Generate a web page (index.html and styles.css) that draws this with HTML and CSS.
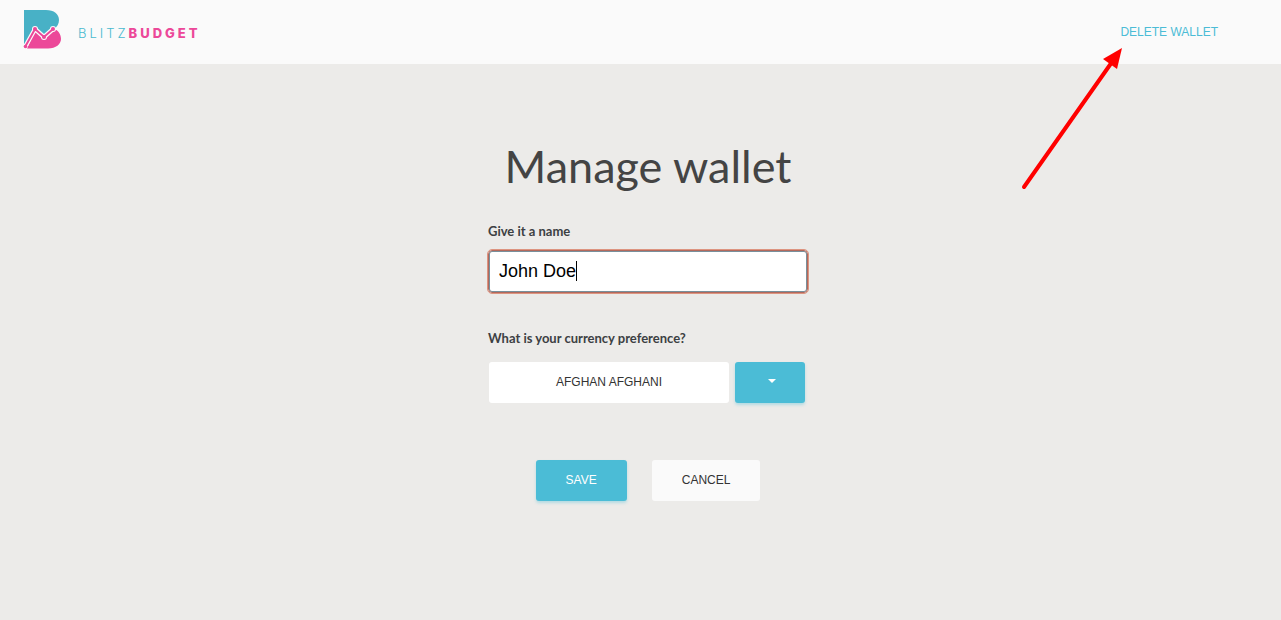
FILE: index.html
```html
<!DOCTYPE html>
<html lang="en">
<head>
<meta charset="utf-8">
<meta name="viewport" content="width=device-width, initial-scale=1">
<title>Manage wallet</title>
<link rel="stylesheet" href="styles.css">
</head>
<body>
<header class="topbar">
  <a class="brand" href="#">
    <svg class="brand-mark" viewBox="0 0 40 41" width="40" height="41" aria-hidden="true">
      <path fill="#48b1c6" d="M1 1H23C31 1 36 5 36 11C36 15 34 18 31 20L21 28L12 20L1 38Z"/>
      <path fill="#ec4899" d="M4 39.500L12 22L21 30L31 20C35 21 38 25 38 30C38 35 33 39.500 25 39.500Z"/>
      <path fill="none" stroke="#fafafa" stroke-width="4.500" stroke-linejoin="round" d="M2 38L12 20L21 28L30 20"/>
      <g fill="#fafafa"><circle cx="12" cy="20" r="3"/><circle cx="21" cy="28" r="3"/><circle cx="30" cy="20" r="3"/></g>
      <path fill="none" stroke="#ec4899" stroke-width="2" d="M2 38L12 20L21 28L30 20"/>
      <g fill="#ec4899"><circle cx="2.500" cy="37.500" r="1.800"/><circle cx="12" cy="20" r="2"/><circle cx="21" cy="28" r="2"/><circle cx="30" cy="20" r="2"/></g>
    </svg>
    <span class="brand-name"><span class="brand-light">BLITZ</span><span class="brand-bold">BUDGET</span></span>
  </a>
  <button class="delete" type="button">DELETE WALLET</button>
  <svg class="arrow" viewBox="0 0 104 144" width="104" height="144" aria-hidden="true">
    <path d="M5 141L93 16" fill="none" stroke="#f00" stroke-width="4" stroke-linecap="round"/>
    <path d="M103 2L84 13L98 23Z" fill="#f00"/>
  </svg>
</header>
<main class="page">
  <h1 class="title">Manage wallet</h1>
  <form class="wallet">
    <label class="label" for="wallet-name">Give it a name</label>
    <div class="field">
      <input class="name" id="wallet-name" type="text" value="John Doe">
      <span class="caret"></span>
    </div>
    <div class="label" id="currency-label">What is your currency preference?</div>
    <div class="currency" role="group" aria-labelledby="currency-label">
      <button class="btn btn-white" type="button">AFGHAN AFGHANI</button>
      <button class="btn btn-info btn-toggle" type="button" aria-label="Choose currency">
        <svg viewBox="0 0 8 4" width="8" height="4" aria-hidden="true"><path d="M0 0H8L4 4Z" fill="#fff"/></svg>
      </button>
    </div>
    <div class="actions">
      <button class="btn btn-info" type="submit">SAVE</button>
      <button class="btn btn-pale" type="button">CANCEL</button>
    </div>
  </form>
</main>
</body>
</html>
```

FILE: styles.css
```css
* { box-sizing: border-box; }
body {
  margin: 0;
  min-height: 100vh;
  background: #ecebe9;
  color: #3c4043;
  font-family: "Liberation Sans", Arial, sans-serif;
  font-size: 12px;
}
button { font: inherit; cursor: pointer; }
.topbar {
  position: relative;
  display: flex;
  align-items: center;
  justify-content: space-between;
  height: 64px;
  padding: 0 63px 0 23px;
  background: #fafafa;
}
.brand {
  display: flex;
  align-items: center;
  gap: 15px;
  padding-bottom: 5px;
  text-decoration: none;
}
.brand-name {
  padding-top: 6px;
  font-family: Inter, sans-serif;
  font-size: 13px;
  line-height: 16px;
  letter-spacing: 3px;
}
.brand-light { color: #48b9cf; font-weight: 300; }
.brand-bold { color: #ec4899; font-weight: 800; }
.delete {
  padding: 0;
  border: 0;
  background: none;
  color: #4bbcd6;
}
.arrow {
  position: absolute;
  top: 46px;
  right: 158px;
  pointer-events: none;
}
.page {
  display: flex;
  flex-direction: column;
  align-items: center;
  padding: 70px 0 40px 15px;
}
.title {
  margin: 0 0 23px;
  color: #444;
  font-family: Lato, sans-serif;
  font-size: 45px;
  font-weight: 400;
  line-height: 64px;
}
.wallet {
  width: 100%;
  max-width: 320px;
}
.label {
  display: block;
  margin-bottom: 9px;
  font-family: Lato, sans-serif;
  font-size: 13px;
  font-weight: 700;
  line-height: 20px;
}
.field {
  position: relative;
  margin-bottom: 35px;
}
.name {
  display: block;
  width: 100%;
  height: 43px;
  padding: 0 10px;
  border: 1px solid #b3695c;
  border-radius: 4px;
  outline: 1px solid #dd9480;
  outline-offset: 0;
  background: #fff;
  box-shadow: inset 0 0 0 1px #78909c;
  color: #000;
  font: 18px "Liberation Sans", Arial, sans-serif;
}
.caret {
  position: absolute;
  top: 11px;
  left: 88px;
  width: 1px;
  height: 20px;
  background: #000;
}
.currency {
  display: flex;
  gap: 6px;
  padding: 5px 3px 0 1px;
}
.btn {
  height: 41px;
  padding: 0 30px 2px;
  border: 0;
  border-radius: 3px;
}
.btn-white { flex: 1; background: #fff; color: #333; }
.btn-info {
  background: #4bbcd6;
  color: #fff;
  box-shadow: 0 2px 3px rgba(75, 188, 214, .35);
}
.btn-toggle {
  display: flex;
  align-items: center;
  justify-content: center;
  width: 70px;
  padding: 0 0 4px 3px;
}
.btn-pale { background: #fafafa; color: #333; }
.actions {
  display: flex;
  justify-content: center;
  gap: 25px;
  margin-top: 57px;
}
```
